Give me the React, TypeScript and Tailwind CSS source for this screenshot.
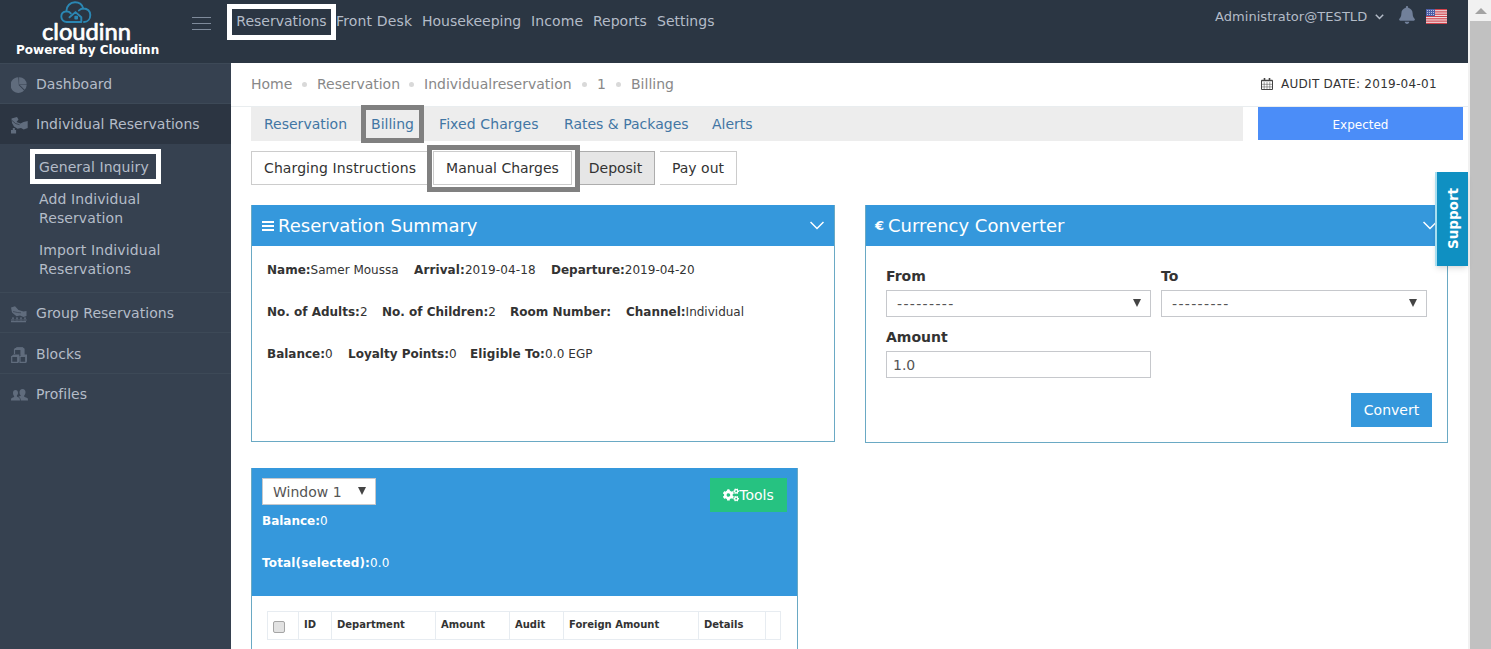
import React from "react";
import { FaBell, FaCogs } from "react-icons/fa";

const topMenu = [
  { label: "Front Desk", width: "w-[86px] tracking-[0.15px]" },
  { label: "Housekeeping", width: "w-[109px]" },
  { label: "Income", width: "w-[62px] tracking-[0.1px]" },
  { label: "Reports", width: "w-[64px]" },
  { label: "Settings", width: "w-[64px]" },
];

const crumbs = [
  { label: "Home", width: "w-[66px]" },
  { label: "Reservation", width: "w-[107px]" },
  { label: "Individualreservation", width: "w-[173px]" },
  { label: "1", width: "w-[34px]" },
  { label: "Billing", width: "w-[44px]" },
];

const summary = [
  [
    { label: "Name:", value: "Samer Moussa", width: "w-[147px]" },
    { label: "Arrival:", value: "2019-04-18", width: "w-[137px] tracking-[0.1px]" },
    { label: "Departure:", value: "2019-04-20", width: "w-[160px]" },
  ],
  [
    { label: "No. of Adults:", value: "2", width: "w-[115px]" },
    { label: "No. of Children:", value: "2", width: "w-[128px]" },
    { label: "Room Number:", value: "", width: "w-[116px]" },
    { label: "Channel:", value: "Individual", width: "w-[130px]" },
  ],
  [
    { label: "Balance:", value: "0", width: "w-[81px]" },
    { label: "Loyalty Points:", value: "0", width: "w-[122px]" },
    { label: "Eligible To:", value: "0.0 EGP", width: "w-[140px] tracking-[0.1px]" },
  ],
];

const columns = [
  { label: "ID", width: "w-[33px]" },
  { label: "Department", width: "w-[104px]" },
  { label: "Amount", width: "w-[74px]" },
  { label: "Audit", width: "w-[54px]" },
  { label: "Foreign Amount", width: "w-[135px]" },
  { label: "Details", width: "w-[67px]" },
  { label: "", width: "w-[15px]" },
];

function Logo() {
  return (
    <svg width="175" height="43" viewBox="0 0 175 43" className="block">
      <g fill="none" stroke="#2b87b3" strokeWidth="1.900" strokeLinecap="round" strokeLinejoin="round">
        <path d="M67 22c-3.600 0-5.700-2.500-5.700-5.400 0-3.300 2.300-5 5-5.200C66.300 5.800 70.500 2.300 75 2.300c4.300 0 7.300 2.500 8.200 6.200C87.500 8.300 90.300 11.300 90.300 14.900c0 4-2.500 7.100-6.300 7.100" />
        <path d="M66.500 11.400c2.200 0 3.500.9 4.300 2M83.200 8.500c-2 .1-3.300.8-4.300 2" />
        <path d="M69.500 17.300l6-5.200 5.800 5.200V22H67" />
        <path d="M75.300 16.800h1.800v1.800h-1.800z" />
      </g>
      <text
        x="42"
        y="40"
        fill="#fff"
        stroke="#fff"
        strokeWidth="0.7"
        strokeLinejoin="round"
        textLength="89"
        lengthAdjust="spacingAndGlyphs"
        className="font-['Lato',sans-serif] text-[23px] leading-none font-normal"
      >
        cloudinn
      </text>
    </svg>
  );
}

function PieIcon() {
  return (
    <svg width="16" height="16" viewBox="0 0 16 16" fill="currentColor">
      <path d="M7.300.3a7.800 7.800 0 1 0 5.700 13.200L7.800 8.300z" />
      <path d="M8.100.2v7.400h7.600A7.300 7.300 0 0 0 8.100.2zM8.800 8.100l4.800 4.600a7 7 0 0 0 2.100-4.600z" />
    </svg>
  );
}

function HandshakeIcon() {
  return (
    <svg width="17" height="17" viewBox="0 0 17 17" fill="currentColor">
      <path d="M.5 1.500L6 0l1.500 2.500L5.500 5l4 1.500 3-1.500 4.200-1v7l-4 1.500L10 11l-3.500.7L3 9.500 1 6z" />
      <path d="M1.800 11h2v2h1.300v3.500H0V13h1.800z" />
      <path d="M1 3.500l3.500 3 4 1.200" stroke="#2c3542" strokeWidth=".7" fill="none" />
    </svg>
  );
}

function GroupIcon() {
  return (
    <svg width="17" height="17" viewBox="0 0 17 17" fill="currentColor">
      <path d="M0 1.500L4 .3 7.500 4l5 1.500L15.500 5v5l-3 1L9 9.500l-3.500.8L1 6.500z" />
      <path d="M2 5.500l4.500 1 3.500.3" stroke="#364150" strokeWidth=".7" fill="none" />
      <path d="M1 11.500h2v1.200H1zM5 11.500h2v1.200H5zM9 11.500h2v1.200H9zM13 11.500h2v1.200h-2zM0 13.500h3.600v1H0zM4.300 13.500h3.400v1H4.300zM8.300 13.500h3.400v1H8.300zM12.300 13.500h3.400v1h-3.400zM0 15h15v1.300H0z" />
    </svg>
  );
}

function BlocksIcon() {
  return (
    <svg width="16" height="16" viewBox="0 0 16 16" fill="none" stroke="currentColor" strokeWidth="1.200">
      <path d="M3.500 7V2.500L6 .8h5.500L13 2v5.500L11.500 8" />
      <path d="M3.500 2.500H10V8M10 2.500L12 1" />
      <path d="M3.500 1.500L6 .5h5.500L12.500 2l-2.500 1H3.500zM10 3l3-1.500v6L10 9z" fill="currentColor" stroke="none" />
      <path d="M.7 9.500h6v5.800h-6zM9 9.500h5.700v5.800H9z" />
      <path d="M0 9.500L2.500 7.500h5.800v6.800L7 16V9.500zM8.500 9.500l2-2H16v6.800L14.800 16v-6.500z" fill="currentColor" stroke="none" />
    </svg>
  );
}

function UsersIcon() {
  return (
    <svg width="17" height="14" viewBox="0 0 17 14" fill="currentColor">
      <path d="M11.500 1c2 0 3 1.300 3 3.200 0 1.700-.7 2.500-1.300 3.200v1.300l3 1.300c.6.300.8 1 .8 2.500H9.800c0-2-.7-3-2.300-3.800l2.300-1V7.400C9.100 6.800 8.500 5.800 8.500 4.200 8.500 2.300 9.600 1 11.500 1z" />
      <path d="M4.500 2C6.200 2 7 3.200 7 4.800c0 1.500-.6 2.200-1.100 2.700v1l1.800.9c.9.500 1.300 1.400 1.300 3.100H0c0-1.500.2-2.200.8-2.500l2.300-1v-1C2.500 7.500 2 6.600 2 4.800 2 3.200 2.800 2 4.500 2z" />
    </svg>
  );
}

function CalendarIcon() {
  return (
    <svg width="12" height="12" viewBox="0 0 12 12" fill="none" stroke="#444" className="mr-[8px]">
      <path d="M.5 2.500h11v9H.5z" />
      <path d="M.5 2.500h11" strokeWidth="1.500" />
      <path d="M3.500 0v3M8.500 0v3" strokeWidth="1.600" />
      <path d="M3.200 4v7.500M6 4v7.500M8.800 4v7.500M.5 6.300h11M.5 8.900h11" strokeWidth=".5" />
    </svg>
  );
}

function Flag() {
  return (
    <svg width="21" height="15" viewBox="0 0 21 15">
      <rect width="21" height="15" fill="#f3e9ea" />
      {[0, 1, 2, 3, 4, 5, 6].map((i) => (
        <rect key={i} y={i * 2.3} width="21" height="1.2" fill="#d0424c" />
      ))}
      <rect width="9" height="7" fill="#4c5ea6" />
      {[1, 3, 5].map((y) => (
        <path key={y} d={`M1 ${y + 0.5}h7`} stroke="#b9c1e0" strokeWidth="1" strokeDasharray="1 1" />
      ))}
    </svg>
  );
}

function Chevron({ className = "" }: { className?: string }) {
  return (
    <svg width="14" height="9" viewBox="0 0 14 9" fill="none" stroke="#fff" strokeWidth="1.500" className={className}>
      <path d="M.5 1L7 7.500 13.500 1" />
    </svg>
  );
}

function MenuLines() {
  return (
    <svg width="12" height="10" viewBox="0 0 12 10" fill="#fff" className="mr-[4px]">
      <path d="M0 0h12v2H0zM0 4h12v2H0zM0 8h12v2H0z" />
    </svg>
  );
}

function Arrow() {
  return (
    <svg width="8" height="8" viewBox="0 0 8 8" fill="#444">
      <path d="M0 0h8L4 8z" />
    </svg>
  );
}

function SelectBox({ label, width }: { label: string; width: string }) {
  return (
    <div className={`flex h-[27px] items-center justify-between border border-[#c6c8cc] bg-white pl-[10px] text-[14px] text-[#555] ${width}`}>
      <span>{label}</span>
      <span className="mr-[9px] pb-[2px]">
        <Arrow />
      </span>
    </div>
  );
}

function NavRow({ icon, label, active }: { icon: React.ReactNode; label: string; active?: boolean }) {
  return (
    <div className={`flex h-[40.3px] items-center border-t border-[#3d4957] pl-[11px] text-[#b4bcc8] ${active ? "bg-[#2c3542]" : ""}`}>
      <span className="mt-[3px] w-[25px] text-[#606c7d]">{icon}</span>
      <span className="pt-[2px] text-[14px] tracking-[0.03px]">{label}</span>
    </div>
  );
}

function Sidebar() {
  return (
    <aside className="h-[586px] w-[231px] shrink-0 bg-[#364150]">
      <NavRow icon={<PieIcon />} label="Dashboard" />
      <NavRow icon={<HandshakeIcon />} label="Individual Reservations" active />
      <div className="h-[148.500px] pt-[5px] text-[14px] leading-[19px] tracking-[0.1px] text-[#b4bcc8]">
        <div className="ml-[30px] flex h-[35px] w-[131px] items-center border-[5px] border-white pt-[3px] pl-[4px] whitespace-nowrap">
          General Inquiry
        </div>
        <div className="mt-[6px] ml-[39px] w-[140px]">
          Add Individual
          <br />
          Reservation
        </div>
        <div className="mt-[13px] ml-[39px] w-[140px] tracking-[0.15px]">
          Import Individual
          <br />
          Reservations
        </div>
      </div>
      <NavRow icon={<GroupIcon />} label="Group Reservations" />
      <NavRow icon={<BlocksIcon />} label="Blocks" />
      <NavRow icon={<UsersIcon />} label="Profiles" />
    </aside>
  );
}

function Header() {
  return (
    <header className="flex h-[63px] w-full bg-[#2b3643] text-[#b4bcc8]">
      <div className="w-[175px] shrink-0">
        <Logo />
        <div className="ml-[16px] text-[12px] leading-[14px] font-bold whitespace-nowrap text-white">Powered by Cloudinn</div>
      </div>
      <div className="mt-[17px] ml-[17px] flex h-[13px] w-[19px] flex-col justify-between">
        <span className="h-px bg-[#7f8b9b]" />
        <span className="h-px bg-[#7f8b9b]" />
        <span className="h-px bg-[#7f8b9b]" />
      </div>
      <nav className="mt-[4px] ml-[16px] flex h-[36px] items-center text-[14px] whitespace-nowrap">
        <div className="flex h-[36px] w-[109px] items-center justify-center border-[5px] border-white pb-[2px]">Reservations</div>
        {topMenu.map((m) => (
          <span key={m.label} className={`pb-[2px] ${m.width}`}>
            {m.label}
          </span>
        ))}
      </nav>
      <div className="ml-auto flex h-[33px] items-center pr-[21px] text-[13px]">
        <span className="w-[153px] tracking-[0.05px] whitespace-nowrap">Administrator@TESTLD</span>
        <svg width="9" height="6" viewBox="0 0 9 6" fill="none" stroke="#b4bcc8" strokeWidth="1.500" className="ml-[7px]">
          <path d="M.8.8l3.700 3.700L8.200.8" />
        </svg>
        <FaBell size={18} color="#71809a" className="mr-[10px] mb-[4px] ml-[14px]" />
        <Flag />
      </div>
    </header>
  );
}

function TabBar() {
  return (
    <div className="flex">
      <div className="flex h-[34px] w-[992px] items-center bg-[#ededed] text-[14px] whitespace-nowrap text-[#4276a4]">
        <span className="ml-[13px] w-[97px]">Reservation</span>
        <span className="-my-[2px] flex h-[38px] w-[63px] items-center justify-center border-[5px] border-[#808080]">Billing</span>
        <span className="ml-[15px] w-[125px] tracking-[0.1px]">Fixed Charges</span>
        <span className="w-[148px]">Rates &amp; Packages</span>
        <span>Alerts</span>
      </div>
      <div className="ml-[15px] flex h-[33px] w-[205px] items-center justify-center bg-[#4b8df8] pt-[2px] text-[12px] text-white">Expected</div>
    </div>
  );
}

function ActionButtons() {
  return (
    <div className="mt-[4px] flex h-[47px] items-center text-[14px] whitespace-nowrap text-[#333]">
      <button className="-mt-px h-[34px] w-[176px] border border-r-0 border-[#ccc] pl-[12px] text-left tracking-[0.1px]">Charging Instructions</button>
      <div className="flex h-[47px] w-[153px] items-center border-[5px] border-[#808080] pl-px">
        <button className="-mt-px h-[34px] w-[139px] border border-[#ccc] pt-px">Manual Charges</button>
      </div>
      <button className="-mt-px h-[34px] w-[75px] border border-l-0 border-[#adadad] bg-[#e6e6e6] pr-[3px]">Deposit</button>
      <button className="-mt-px ml-[5px] h-[34px] w-[77px] border border-l-0 border-[#ccc]">Pay out</button>
    </div>
  );
}

function PanelTitle({ icon, title }: { icon: React.ReactNode; title: string }) {
  return (
    <div className="flex h-[41px] items-center bg-[#3598dc] pl-[10px] text-[18px] text-white">
      {icon}
      <span className="whitespace-nowrap">{title}</span>
      <Chevron className="mr-[10px] ml-auto" />
    </div>
  );
}

function ReservationSummary() {
  return (
    <section className="h-[237px] w-[584px] border border-t-0 border-[#6aa9c4]">
      <PanelTitle icon={<MenuLines />} title="Reservation Summary" />
      <div className="px-[15px] pt-[15px] text-[12px] leading-[18px] text-[#333]">
        {summary.map((row, i) => (
          <div key={i} className="mb-[24px] flex whitespace-nowrap">
            {row.map((f) => (
              <span key={f.label} className={f.width}>
                <b>{f.label}</b>
                {f.value}
              </span>
            ))}
          </div>
        ))}
      </div>
    </section>
  );
}

function CurrencyConverter() {
  const dashes = "---------";
  return (
    <section className="h-[238px] w-[583px] border border-t-0 border-[#6aa9c4] text-[#333]">
      <PanelTitle icon={<span className="-ml-px w-[13px] pt-px text-[13px] font-bold">€</span>} title="Currency Converter" />
      <div className="px-[20px] pt-[20px]">
        <div className="flex gap-[10px]">
          <label className="text-[14px] leading-[20px] font-bold">
            From
            <div className="mt-[4px] font-normal tracking-[1.35px]">
              <SelectBox label={dashes} width="w-[265px]" />
            </div>
          </label>
          <label className="text-[14px] leading-[20px] font-bold">
            To
            <div className="mt-[4px] font-normal tracking-[1.35px]">
              <SelectBox label={dashes} width="w-[266px]" />
            </div>
          </label>
        </div>
        <div className="mt-[10px] text-[14px] leading-[20px] font-bold">Amount</div>
        <input defaultValue="1.0" className="mt-[4px] block h-[27px] w-[265px] border border-[#c6c8cc] px-[6px] text-[14px] text-[#555]" />
        <button className="mt-[15px] -mr-[5px] ml-auto block h-[34px] w-[81px] bg-[#3598dc] text-[14px] text-white">Convert</button>
      </div>
    </section>
  );
}

function WindowPanel() {
  return (
    <section className="h-[181px] w-[547px] border-x border-[#6aa9c4]">
      <div className="flex h-[128px] justify-between bg-[#3598dc] px-[10px] pt-[10px] text-white">
        <div className="text-[12px] leading-[18px]">
          <SelectBox label="Window 1" width="w-[114px]" />
          <div className="mt-[7px]">
            <b>Balance:</b>0
          </div>
          <div className="mt-[24px] tracking-[0.15px]">
            <b>Total(selected):</b>0.0
          </div>
        </div>
        <button className="flex h-[34px] w-[77px] items-center justify-center bg-[#26c281] text-[14px]">
          <FaCogs size={16} />
          Tools
        </button>
      </div>
      <div className="mt-[15px] ml-[15px] flex h-[29px] w-[514px] border border-r-0 border-[#e7ecf1] text-[10px] font-bold text-[#333]">
        <div className="flex w-[31px] shrink-0 items-center border-r border-[#e7ecf1] pl-[5px]">
          <span className="mt-[3px] h-[12px] w-[12px] rounded-[2px] border border-[#a5a5a5] bg-[#e2e2e2]" />
        </div>
        {columns.map((c, i) => (
          <div key={i} className={`shrink-0 border-r border-[#e7ecf1] pl-[5px] leading-[25px] whitespace-nowrap ${c.width}`}>
            {c.label}
          </div>
        ))}
      </div>
    </section>
  );
}

export default function App() {
  return (
    <div className="relative flex h-[649px] w-[1491px] overflow-hidden bg-white font-['DejaVu_Sans',sans-serif]">
      <div className="w-[1468px] shrink-0">
        <Header />
        <div className="flex">
          <Sidebar />
          <main className="w-[1237px]">
            <div className="flex h-[44px] items-center border-b border-[#e9edef] pl-[20px] text-[14px] whitespace-nowrap text-[#888]">
              {crumbs.map((c, i) => (
                <span key={c.label} className={`flex items-center justify-between ${c.width}`}>
                  {c.label}
                  {i < crumbs.length - 1 && <span className="mr-[10px] h-[5px] w-[5px] rounded-full bg-[#d9d9d9]" />}
                </span>
              ))}
              <span className="ml-auto flex items-center pr-[31px] pb-[2px] text-[12px] text-[#333]">
                <CalendarIcon />
                <span className="w-[156px] tracking-[0.28px]">AUDIT DATE: 2019-04-01</span>
              </span>
            </div>
            <div className="pl-[20px]">
              <TabBar />
              <ActionButtons />
              <div className="mt-[13px] flex gap-[30px]">
                <ReservationSummary />
                <CurrencyConverter />
              </div>
              <div className="mt-[25px]">
                <WindowPanel />
              </div>
            </div>
          </main>
        </div>
      </div>
      <div className="w-[23px] shrink-0 border-l-2 border-[#f1f1f1] bg-[#c1c1c1]">
        <div className="flex h-[21px] items-center justify-center bg-[#f1f1f1]">
          <svg width="12" height="6" viewBox="0 0 12 6" fill="#a3a3a3">
            <path d="M0 6l6-6 6 6z" />
          </svg>
        </div>
      </div>
      <div className="absolute top-[172px] left-[1435px] flex h-[94px] w-[33px] items-center justify-center border-l-2 border-[#a8def0] bg-[#0f90c2] pl-[2px] shadow-md">
        <span className="rotate-180 text-[13.500px] font-bold text-white [writing-mode:vertical-rl]">Support</span>
      </div>
    </div>
  );
}
